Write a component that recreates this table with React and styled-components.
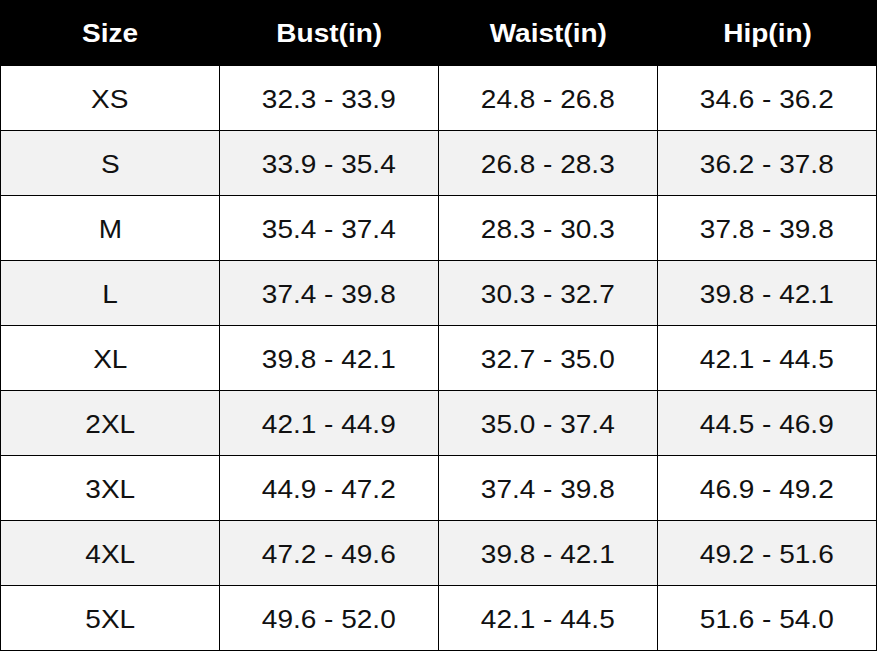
import React from "react";
import styled, { createGlobalStyle } from "styled-components";

const Global = createGlobalStyle`
  html, body { margin: 0; padding: 0; background: #fff; }
  body { font-family: "Liberation Sans", Arial, sans-serif; }
`;

const Table = styled.div`
  width: 877px;
  display: grid;
  grid-template-columns: repeat(4, 1fr);
  box-sizing: border-box;
  border-left: 1px solid #000;
`;

const HeadCell = styled.div`
  height: 66px;
  background: #000;
  color: #fff;
  display: flex;
  align-items: center;
  justify-content: center;
  font-weight: 700;
  font-size: 25px;
`;

const Cell = styled.div`
  height: 65px;
  box-sizing: border-box;
  border-right: 1px solid #000;
  border-bottom: 1px solid #000;
  background: ${(p) => (p.$shade ? "#f2f2f2" : "#fff")};
  color: #111;
  display: flex;
  align-items: center;
  justify-content: center;
  font-size: 25px;
  padding-top: 2px;
`;

const Text = styled.span`
  display: inline-block;
  transform: scaleX(1.12);
  white-space: nowrap;
`;

const headers = ["Size", "Bust(in)", "Waist(in)", "Hip(in)"];
const rows = [
  ["XS", "32.3 - 33.9", "24.8 - 26.8", "34.6 - 36.2"],
  ["S", "33.9 - 35.4", "26.8 - 28.3", "36.2 - 37.8"],
  ["M", "35.4 - 37.4", "28.3 - 30.3", "37.8 - 39.8"],
  ["L", "37.4 - 39.8", "30.3 - 32.7", "39.8 - 42.1"],
  ["XL", "39.8 - 42.1", "32.7 - 35.0", "42.1 - 44.5"],
  ["2XL", "42.1 - 44.9", "35.0 - 37.4", "44.5 - 46.9"],
  ["3XL", "44.9 - 47.2", "37.4 - 39.8", "46.9 - 49.2"],
  ["4XL", "47.2 - 49.6", "39.8 - 42.1", "49.2 - 51.6"],
  ["5XL", "49.6 - 52.0", "42.1 - 44.5", "51.6 - 54.0"],
];

export default function App() {
  return (
    <>
      <Global />
      <Table>
        {headers.map((h) => (
          <HeadCell key={h}>
            <Text>{h}</Text>
          </HeadCell>
        ))}
        {rows.map((r, i) =>
          r.map((c, j) => (
            <Cell key={`${i}-${j}`} $shade={i % 2 === 1}>
              <Text>{c}</Text>
            </Cell>
          ))
        )}
      </Table>
    </>
  );
}
